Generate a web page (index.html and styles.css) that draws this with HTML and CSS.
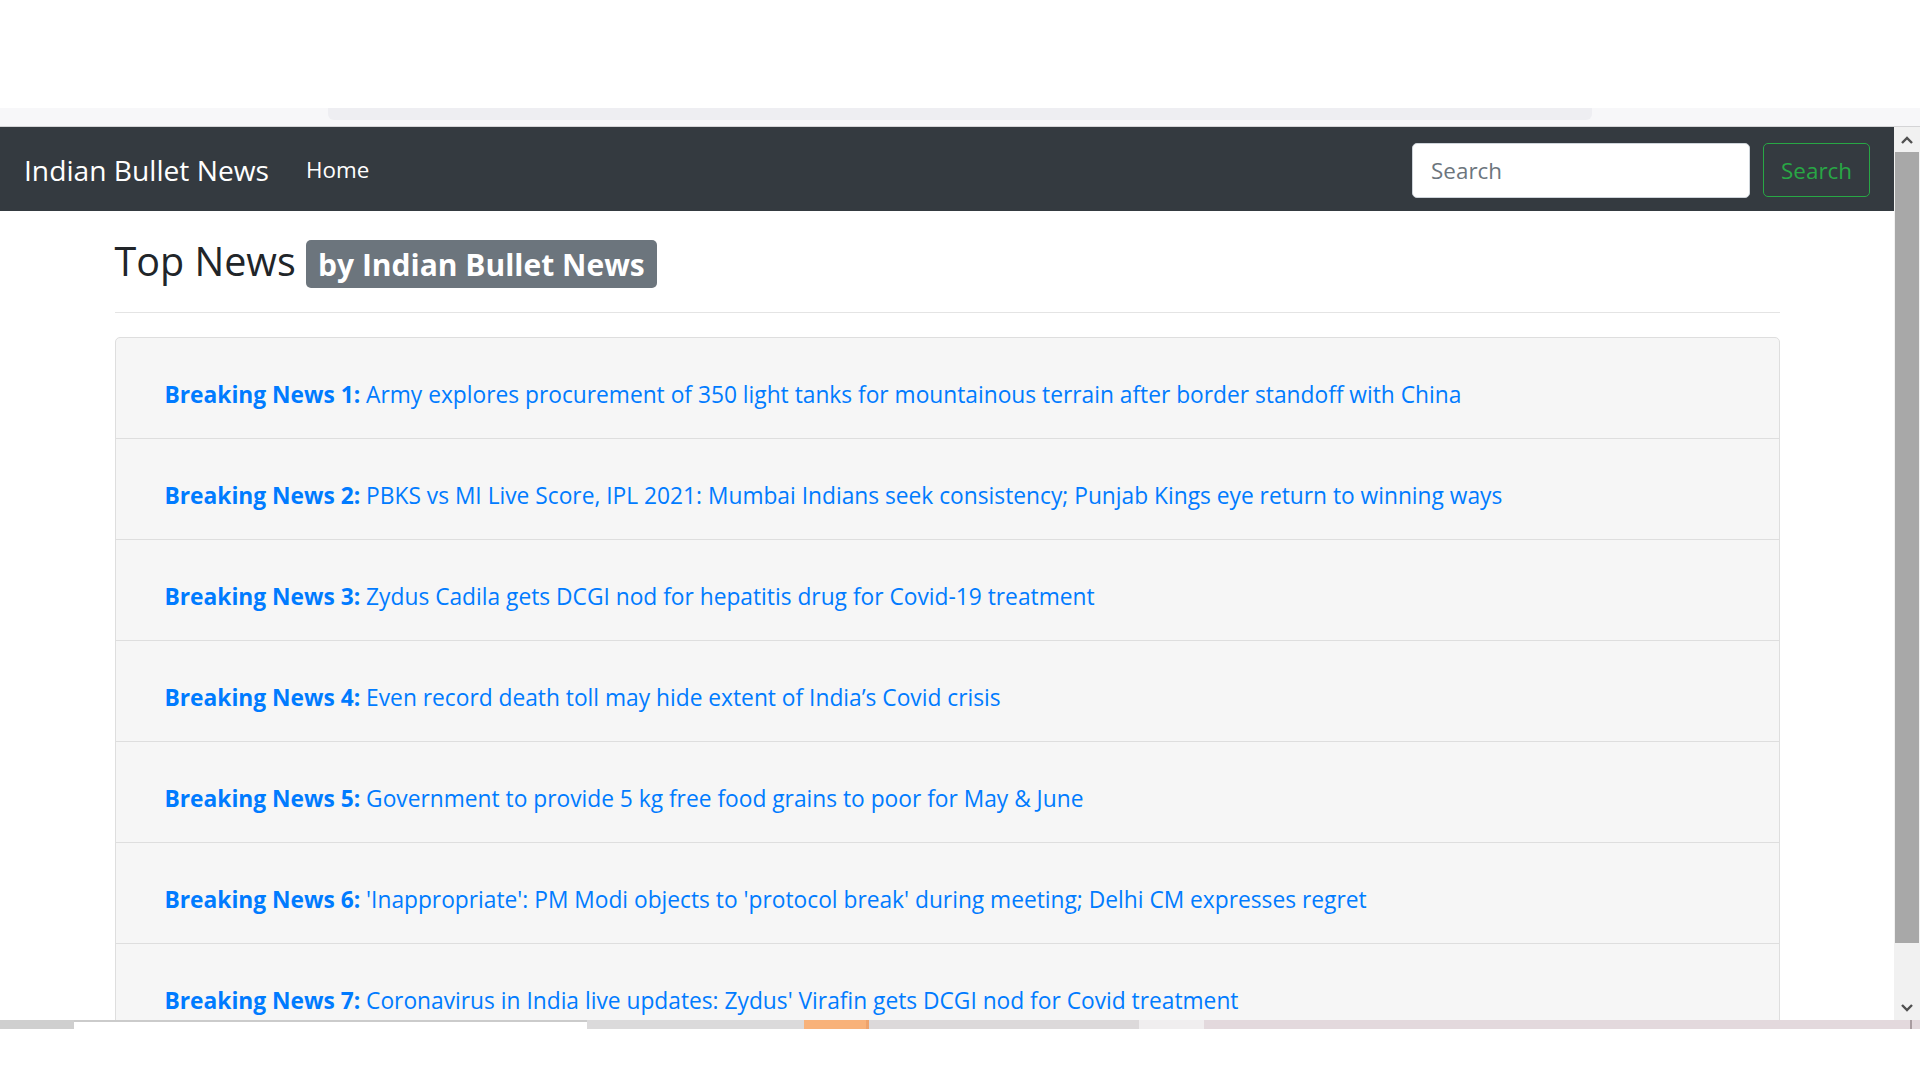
FILE: index.html
```html
<!DOCTYPE html>
<html lang="en">
<head>
<meta charset="utf-8">
<title>Indian Bullet News</title>
<link rel="stylesheet" href="styles.css">
</head>
<body>
<div class="top-blank"></div>
<div class="tabstrip"><div class="pill"></div></div>
<div class="viewport">
  <div class="page">
    <nav class="navbar">
      <a class="brand" href="#">Indian Bullet News</a>
      <a class="nav-link" href="#">Home</a>
      <form class="search">
        <input class="search-input" type="search" placeholder="Search">
        <button class="search-btn" type="button">Search</button>
      </form>
    </nav>
    <main class="container">
      <h3 class="title">Top News <span class="badge">by Indian Bullet News</span></h3>
      <hr class="rule">
      <ul class="news">
        <li class="item"><a href="#"><b>Breaking News 1:</b> Army explores procurement of 350 light tanks for mountainous terrain after border standoff with China</a></li>
        <li class="item"><a href="#"><b>Breaking News 2:</b> PBKS vs MI Live Score, IPL 2021: Mumbai Indians seek consistency; Punjab Kings eye return to winning ways</a></li>
        <li class="item"><a href="#"><b>Breaking News 3:</b> Zydus Cadila gets DCGI nod for hepatitis drug for Covid-19 treatment</a></li>
        <li class="item"><a href="#"><b>Breaking News 4:</b> Even record death toll may hide extent of India’s Covid crisis</a></li>
        <li class="item"><a href="#"><b>Breaking News 5:</b> Government to provide 5 kg free food grains to poor for May &amp; June</a></li>
        <li class="item"><a href="#"><b>Breaking News 6:</b> 'Inappropriate': PM Modi objects to 'protocol break' during meeting; Delhi CM expresses regret</a></li>
        <li class="item"><a href="#"><b>Breaking News 7:</b> Coronavirus in India live updates: Zydus' Virafin gets DCGI nod for Covid treatment</a></li>
      </ul>
    </main>
  </div>
  <div class="scrollbar">
    <div class="sb-btn"><svg width="12" height="8" viewBox="0 0 12 8"><polyline points="1,7 6,2 11,7" fill="none" stroke="#505050" stroke-width="2.4"/></svg></div>
    <div class="sb-thumb"></div>
    <div class="sb-track"></div>
    <div class="sb-btn"><svg width="12" height="8" viewBox="0 0 12 8"><polyline points="1,1 6,6 11,1" fill="none" stroke="#505050" stroke-width="2.4"/></svg></div>
  </div>
</div>
<div class="taskbar">
  <div class="seg s1"></div>
  <div class="seg s2"></div>
  <div class="seg s3"></div>
  <div class="seg s4"></div>
  <div class="seg s5"></div>
  <div class="seg s6"></div>
  <div class="seg s7"></div>
</div>
</body>
</html>
```
FILE: styles.css
```css
* { box-sizing: border-box; }
html, body { margin: 0; padding: 0; background: #fff; }
body { font-family: "Open Sans", "Noto Sans", sans-serif; color: #212529; height: 1080px; overflow: hidden; }

.top-blank { height: 108px; background: #fff; }
.tabstrip { height: 19px; background: #f7f7f9; border-bottom: 1px solid #d4d4d6; }
.pill { margin-left: 328px; width: 1264px; height: 12px; background: #eeeef2; border-radius: 0 0 6px 6px; }

.viewport { height: 893px; display: flex; overflow: hidden; }
.page { flex: 1; min-width: 0; overflow: hidden; }

.navbar { height: 84px; background: #343a40; display: flex; align-items: center; padding: 2px 24px 0 24px; }
.brand { color: #fff; text-decoration: none; font-size: 28.2px; line-height: 1.5; margin-right: 37px; }
.nav-link { color: #fff; text-decoration: none; font-size: 22.4px; line-height: 1.5; }
.search { margin-left: auto; display: flex; align-items: center; gap: 13px; }
.search-input { width: 338px; height: 55px; border: 1px solid #ced4da; border-radius: 5px; background: #fff; font-family: inherit; font-size: 22.4px; padding: 0 18px; color: #495057; outline: none; }
.search-input::placeholder { color: #6c757d; }
.search-btn { height: 54px; padding: 0 17px; border: 1px solid #28a745; border-radius: 5px; background: transparent; color: #28a745; font-family: inherit; font-size: 22.4px; }

.container { width: 1665px; margin: 0 auto; }
.title { margin: 26px 0 0 0; font-size: 39.5px; font-weight: 400; line-height: 48px; color: #212529; }
.badge { display: inline-block; font-size: 30px; font-weight: 700; line-height: 1; color: #fff; background: #6c757d; border-radius: 5px; padding: 10px 12px 8px 12px; vertical-align: baseline; }
.rule { margin: 24px 0 24px 0; border: 0; border-top: 1px solid #e4e4e4; height: 0; }

.news { list-style: none; margin: 0; padding: 0; border: 1px solid #dedede; border-radius: 5px; background: #f6f6f6; }
.item { height: 101px; display: flex; align-items: center; padding: 14px 48px 0 49px; border-top: 1px solid #dedede; font-size: 22.75px; line-height: 1.5; }
.item:first-child { border-top: 0; height: 100px; }
.item a { color: #007bff; text-decoration: none; white-space: nowrap; }
.item b { font-weight: 700; }

.scrollbar { width: 26px; display: flex; flex-direction: column; background: #f1f1f1; }
.sb-btn { height: 25px; display: flex; align-items: center; justify-content: center; background: #f1f1f1; }
.sb-thumb { height: 791px; background: #a8a8a8; margin: 0 1px 0 1px; }
.sb-track { flex: 1; }

.taskbar { height: 9px; display: flex; }
.seg { height: 9px; }
.s1 { width: 74px; background: #cfcfcf; }
.s2 { width: 513px; background: #fff; border-top: 2px solid #cbcbcb; }
.s3 { width: 217px; background: #dbdadb; }
.s4 { width: 65px; background: #f8b27a; border-right: 3px solid #eea36c; }
.s5 { width: 270px; background: #dcd9da; }
.s6 { width: 65px; background: #f0eeef; }
.s7 { flex: 1; background: #e3d9dd; box-shadow: inset -8px 0 0 #e3d9dd, inset -10px 0 0 #a89ca0; }
```
